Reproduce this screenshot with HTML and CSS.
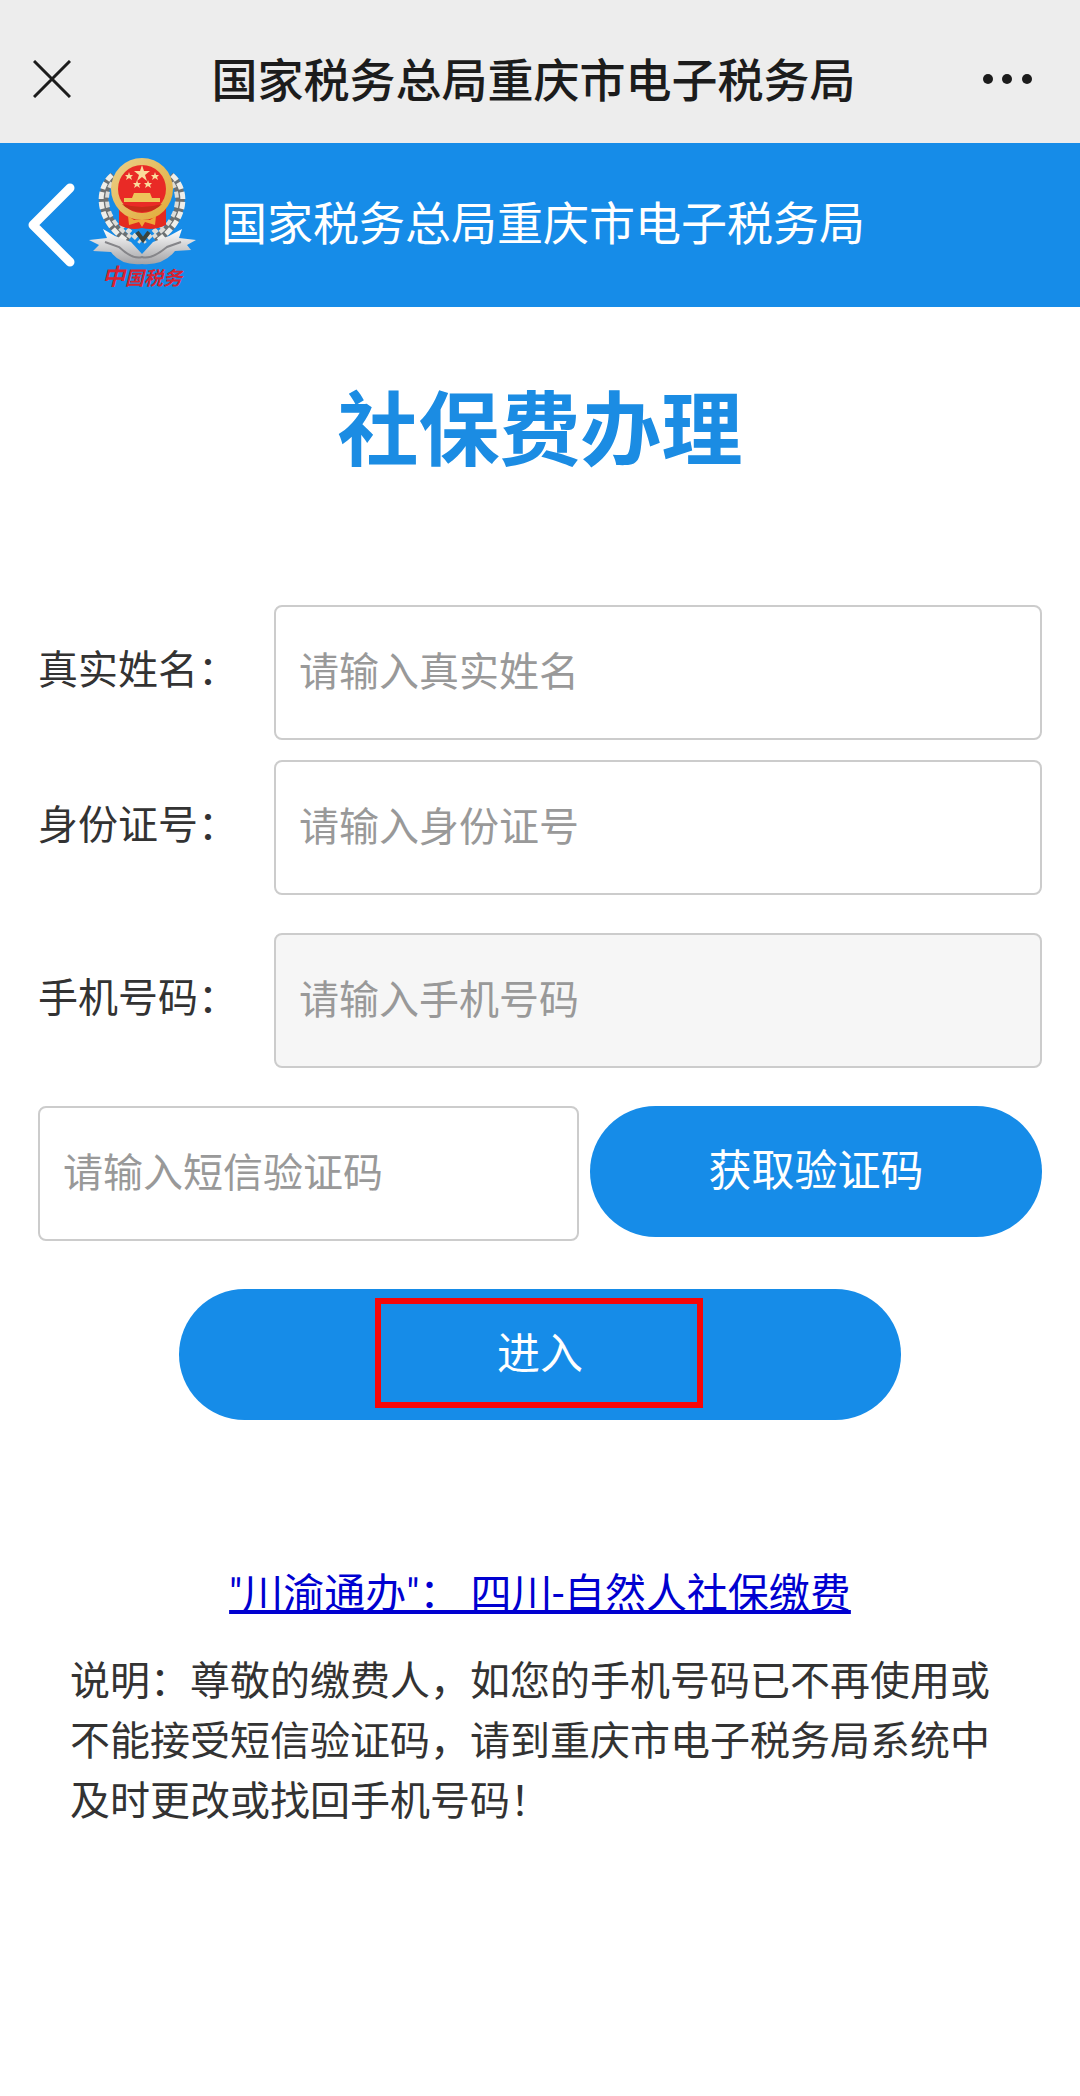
FILE: index.html
```html
<!DOCTYPE html>
<html lang="zh-CN">
<head>
    <meta charset="UTF-8">
    <meta name="viewport" content="width=device-width, initial-scale=1.0">
    <title>国家税务总局重庆市电子税务局</title>
    <link rel="stylesheet" href="styles.css">
</head>
<body>

    <div class="topbar">
        <button type="button" class="icon-btn" aria-label="关闭">
            <svg width="38" height="38" viewBox="0 0 38 38" fill="none" stroke="#1c1c1c" stroke-width="3">
                <path d="M1 1L37 37M37 1L1 37"/>
            </svg>
        </button>
        <div class="topbar-title">国家税务总局重庆市电子税务局</div>
        <button type="button" class="icon-btn" aria-label="更多">
            <svg width="50" height="12" viewBox="0 0 50 12" fill="#1c1c1c">
                <circle cx="6" cy="6" r="5"/>
                <circle cx="25" cy="6" r="5"/>
                <circle cx="45" cy="6" r="5"/>
            </svg>
        </button>
    </div>

    <header class="header">
        <a href="#" class="back" aria-label="返回">
            <svg width="48" height="88" viewBox="0 0 48 88" fill="none" stroke="#fff" stroke-width="9" stroke-linecap="round" stroke-linejoin="round">
                <path d="M43 7L6 44L43 81"/>
            </svg>
        </a>
        <svg class="logo" width="108" height="138" viewBox="0 0 108 138">
            <defs>
                <linearGradient id="silver" x1="0" y1="0" x2="0" y2="1">
                    <stop offset="0" stop-color="#ffffff"/>
                    <stop offset="1" stop-color="#a3a3a6"/>
                </linearGradient>
                <linearGradient id="gold" x1="0" y1="0" x2="1" y2="1">
                    <stop offset="0" stop-color="#ead08a"/>
                    <stop offset="1" stop-color="#e2a935"/>
                </linearGradient>
            </defs>
            <!-- wheat ears -->
            <g fill="none">
                <path d="M25 20C8 35 12 66 40 84M81 20C98 35 94 66 66 84" stroke="#6b7072" stroke-width="9"/>
                <path d="M23 19C5 35 9 66 38 85M83 19C101 35 97 66 68 85" stroke="#eeeeea" stroke-width="5" stroke-dasharray="7 3"/>
                <path d="M27 22C12 36 15 64 42 81M79 22C94 36 91 64 64 81" stroke="#dcdcd8" stroke-width="4" stroke-dasharray="6 4" stroke-dashoffset="4"/>
                <path d="M32 68L52 86M74 68L54 86" stroke="#dcdcd8" stroke-width="5" stroke-dasharray="5 3"/>
            </g>
            <!-- national emblem -->
            <path d="M30 50H77V69Q65 75 53 72Q42 75 30 69Z" fill="#e42a20"/>
            <circle cx="53" cy="33" r="31" fill="url(#gold)"/>
            <circle cx="53" cy="33" r="24" fill="#e92a26"/>
            <g fill="#fbdc9c">
                <path d="M53 9L55 15H61L56 19L58 25L53 21L48 25L50 19L45 15H51Z"/>
                <path d="M40 16L41 19H44L42 21L43 24L40 22L37 24L38 21L36 19H39Z"/>
                <path d="M66 16L67 19H70L68 21L69 24L66 22L63 24L64 21L62 19H65Z"/>
                <path d="M48 24L49 27H52L50 29L51 32L48 30L45 32L46 29L44 27H47Z"/>
                <path d="M59 24L60 27H63L61 29L62 32L59 30L56 32L57 29L55 27H58Z"/>
            </g>
            <path d="M45 37H61L63 42H71V46H35V42H43Z" fill="#eec55a"/>
            <path d="M33 48Q53 54 73 48Q67 55 53 56Q39 55 33 48Z" fill="#c62b18"/>
            <path d="M39 60L45 64H61L67 60L66 69L56 66L53 71L50 66L40 69Z" fill="#eea63a"/>
            <!-- ribbon -->
            <path d="M0 84L18 82L14 73L26 80L42 86L53 98L64 86L80 80L93 73L90 82L107 84L98 89L102 94L86 95Q74 110 53 108Q32 110 22 96L4 95L10 89Z" fill="url(#silver)"/>
            <path d="M16 86L30 91Q44 104 53 101Q62 104 78 91L92 86" fill="none" stroke="#858589" stroke-width="2"/>
            <path d="M48 76L54 84L60 76" fill="none" stroke="#39433f" stroke-width="4"/>
            <text class="logo-text" x="13" y="129"><tspan class="logo-first">中</tspan>国税务</text>
        </svg>
        <div class="header-title">国家税务总局重庆市电子税务局</div>
    </header>

    <main class="container">
        <h1>社保费办理</h1>

        <form id="loginForm">
            <div class="form-group">
                <label for="name">真实姓名：</label>
                <input type="text" id="name" placeholder="请输入真实姓名">
            </div>

            <div class="form-group spaced">
                <label for="idcard">身份证号：</label>
                <input type="text" id="idcard" placeholder="请输入身份证号">
            </div>

            <div class="form-group spaced">
                <label for="phone">手机号码：</label>
                <input type="tel" id="phone" placeholder="请输入手机号码" readonly>
            </div>

            <div class="code-group">
                <input type="text" id="code" placeholder="请输入短信验证码" aria-label="短信验证码">
                <button type="button" class="btn">获取验证码</button>
            </div>

            <div class="submit">
                <button type="button" class="btn btn-enter">进入</button>
                <span class="highlight"></span>
            </div>
        </form>

        <div class="link">
            <a href="#">"川渝通办"： 四川-自然人社保缴费</a>
        </div>

        <p class="note">说明：尊敬的缴费人，如您的手机号码已不再使用或不能接受短信验证码，请到重庆市电子税务局系统中及时更改或找回手机号码！</p>
    </main>

</body>
</html>
```
FILE: styles.css
```css
* {
    box-sizing: border-box;
}

body {
    font-family: "Noto Sans CJK SC", sans-serif;
    font-size: 40px;
    background-color: #fff;
    color: #333;
    margin: 0;
}

.topbar {
    display: flex;
    align-items: center;
    padding: 43px 48px 28px 33px;
    background-color: #ededed;
    color: #1c1c1c;
}

.topbar-title {
    flex: 1;
    padding: 0 0 4px 14px;
    font-size: 46px;
    font-weight: 500;
    line-height: 68px;
    text-align: center;
}

.icon-btn {
    display: flex;
    padding: 0;
    border: none;
    background: none;
    cursor: pointer;
}

.header {
    display: flex;
    align-items: center;
    height: 164px;
    padding-left: 27px;
    background-color: #168ce8;
    color: #fff;
}

.back {
    display: flex;
}

.logo {
    margin-left: 14px;
}

.logo-text {
    font-size: 19px;
    font-style: italic;
    font-weight: bold;
    fill: #d92231;
}

.logo-first {
    font-size: 23px;
}

.header-title {
    margin-left: 24px;
    padding-bottom: 10px;
    font-size: 46px;
    line-height: 68px;
}

.container {
    padding: 57px 38px;
}

h1 {
    margin: 0 0 121px;
    font-size: 81px;
    line-height: 120px;
    text-align: center;
    color: #1b8ce3;
}

.form-group {
    display: flex;
    align-items: center;
    margin-bottom: 20px;
}

.spaced {
    margin-bottom: 38px;
}

label {
    flex: 0 0 236px;
    padding-bottom: 12px;
    line-height: 60px;
}

input {
    flex: 1;
    min-width: 0;
    height: 135px;
    padding: 0 23px 8px;
    border: 2px solid #ccc;
    border-radius: 8px;
    background-color: #fff;
    font-family: inherit;
    font-size: 40px;
    color: #333;
}

input::placeholder {
    color: #999;
}

input[readonly] {
    background-color: #f6f6f6;
}

.code-group {
    display: flex;
    align-items: flex-start;
    gap: 11px;
    margin-bottom: 48px;
}

.code-group .btn {
    width: 45%;
}

.btn {
    height: 131px;
    padding: 0 0 10px;
    border: none;
    border-radius: 66px;
    background-color: #168ce8;
    color: #fff;
    font-family: inherit;
    font-size: 43px;
    cursor: pointer;
}

.submit {
    position: relative;
    display: flex;
    justify-content: center;
    margin-bottom: 144px;
}

.btn-enter {
    width: 72%;
}

/* red frame over the enter button */
.highlight {
    position: absolute;
    top: 9px;
    left: 50%;
    width: 328px;
    height: 110px;
    margin-left: -165px;
    border: 6px solid #f80508;
    pointer-events: none;
}

.link {
    font-family: Roboto, "Noto Sans CJK SC", sans-serif;
    text-align: center;
    font-size: 41px;
    line-height: 60px;
}

.link a {
    color: #0000d0;
    text-decoration-thickness: 4px;
    text-decoration-skip-ink: none;
}

.note {
    margin: 24px 32px 0;
    line-height: 60px;
}
```
